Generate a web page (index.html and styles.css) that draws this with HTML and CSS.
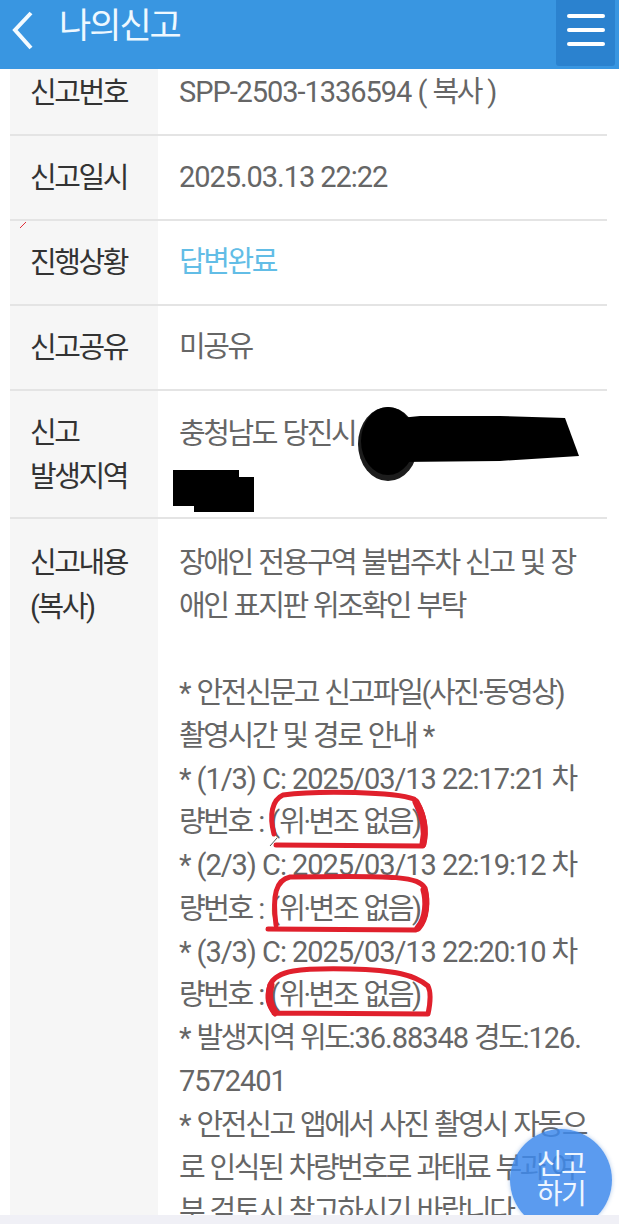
FILE: index.html
```html
<!DOCTYPE html>
<html lang="ko">
<head>
  <meta charset="UTF-8" />
  <meta name="viewport" content="width=device-width, initial-scale=1" />
  <title>나의신고</title>
  <link rel="stylesheet" href="styles.css">
</head>
<body>

  <div class="page">
    <!-- 상단 바 -->
    <header class="top">
      <svg class="back" width="22" height="40" viewBox="0 0 22 40"><path d="M20 2 L4 19 L20 37" fill="none" stroke="#f4fbff" stroke-width="4"/></svg>
      <h1>나의신고</h1>
      <button class="menu" aria-label="menu"><span></span><span></span><span></span></button>
    </header>

    <div class="list">
      <div class="row first">
        <div class="label">신고번호</div>
        <div class="value"><span><span class="n">SPP-2503-1336594 ( </span>복사<span class="n"> )</span></span></div>
      </div>
      <div class="row">
        <div class="label">신고일시</div>
        <div class="value"><span class="n">2025.03.13 22:22</span></div>
      </div>
      <div class="row">
        <div class="label">진행상황</div>
        <div class="value done">답변완료</div>
      </div>
      <div class="row">
        <div class="label">신고공유</div>
        <div class="value">미공유</div>
      </div>
      <div class="row two">
        <div class="label">신고<br>발생지역</div>
        <div class="value">충청남도 당진시</div>
      </div>
      <div class="row content">
        <div class="label">신고내용<br>(복사)</div>
        <div class="value">장애인 전용구역 불법주차 신고 및 장<br>애인 표지판 위조확인 부탁<br><br><span class="n">* </span>안전신문고 신고파일(사진·동영상)<br>촬영시간 및 경로 안내 <span class="n">*</span><br><span class="n">* (1/3) C: 2025/03/13 22:17:21 </span>차<br>량번호 <span class="n">: (</span>위·변조 없음<span class="n">)</span><br><span class="n">* (2/3) C: 2025/03/13 22:19:12 </span>차<br>량번호 <span class="n">: (</span>위·변조 없음<span class="n">)</span><br><span class="n">* (3/3) C: 2025/03/13 22:20:10 </span>차<br>량번호 <span class="n">: (</span>위·변조 없음<span class="n">)</span><br><span class="n">* </span>발생지역 위도<span class="n">:36.88348 </span>경도<span class="n">:126.<br>7572401<br>* </span>안전신고 앱에서 사진 촬영시 자동으<br>로 인식된 차량번호로 과태료 부과 여<br>부 검토시 참고하시기 바랍니다</div>
      </div>
    </div>

    <!-- 사진 위에 그린 표시 -->
    <svg class="marks" width="619" height="1224" viewBox="0 0 619 1224">
      <g fill="#000">
        <ellipse cx="388" cy="444" rx="30" ry="37" fill="#1c1c1c"/>
        <ellipse cx="388" cy="441" rx="27" ry="34"/>
        <path d="M380 420 L420 416 L500 416 L565 418 L579 456 L500 461 L400 462 Z"/>
        <rect x="173" y="470" width="66" height="36"/>
        <rect x="194" y="477" width="60" height="35"/>
      </g>
      <g fill="none" stroke="#e0202c" stroke-width="5" stroke-linecap="round" stroke-linejoin="round">
        <path d="M276 845 L423 846 C428 830 424 810 414 799 C395 792 320 790 283 795 C272 800 269 815 274 834"/>
        <path d="M268 929 L416 930 C428 922 428 898 425 888 C418 877 400 875 290 877 C276 880 272 895 276 925"/>
        <path d="M274 1013 L428 1014 C431 1000 431 992 428 986 C415 975 395 970 350 969 C300 968 276 970 270 985 C266 998 268 1005 275 1014"/>
      </g>
      <g fill="none" stroke="#e0202c" stroke-width="7" stroke-linecap="round">
        <path d="M416 802 C423 815 426 830 423 844"/>
        <path d="M424 890 C427 900 427 918 418 928"/>
        <path d="M271 985 C268 995 270 1005 275 1012"/>
      </g>
      <path d="M20 228 L26 222" stroke="#e0303a" stroke-width="1" fill="none"/>
      <path d="M270 846 L277 838" stroke="#555" stroke-width="1" fill="none"/>
    </svg>

    <div class="report-btn">신고<br>하기</div>
    <div class="bottom"></div>
  </div>

</body>
</html>
```

FILE: styles.css
```css
* { box-sizing: border-box; }
html, body { margin: 0; padding: 0; background: #fff; }
body { font-family: Roboto, "Noto Sans CJK KR", "Noto Sans", sans-serif; font-weight: 400; }

.page { position: relative; width: 619px; height: 1224px; overflow: hidden; }

.top {
  display: flex; align-items: center; height: 69px;
  background: #3996e1; color: #fff; padding: 0 4px 0 11px;
}
.top .back { flex: none; margin-bottom: 8px; }
.top h1 {
  flex: 1; margin: 0 0 24px 26px;
  font-size: 35px; font-weight: 400; letter-spacing: -2px; color: #eef8ff;
}
.menu {
  align-self: flex-start; width: 59px; height: 66px; padding: 14px 10px 0 11px;
  border: none; border-radius: 0 0 3px 3px; background: #2b82cf;
  display: flex; flex-direction: column; gap: 10px;
}
.menu span { display: block; height: 4px; background: #fff; border-radius: 2px; }

.list { margin: 0 12px 0 10px; }
.row {
  display: flex; border-bottom: 2px solid #e4e4e4; min-height: 85px;
  font-size: 29px; letter-spacing: -2.4px; word-spacing: 1.5px;
}
.row.first { min-height: 67px; }
.row.two { min-height: 128px; }
.row.content { border-bottom: none; }

.label {
  flex: none; width: 148px; padding-left: 20px; background: #f6f6f6;
  color: #333; display: flex; align-items: center; line-height: 44px;
}
.value { flex: 1; padding-left: 21px; color: #666; display: flex; align-items: center; line-height: 43.2px; white-space: nowrap; }
.value.done { color: #62bde6; }
.n { letter-spacing: -1.05px; word-spacing: 0; }

.row.first .label, .row.first .value { align-items: flex-start; padding-top: 2px; }
.row.two .label { display: block; padding-top: 20px; }
.row.two .value { align-items: flex-start; padding-top: 22px; }
.row.content .label { display: block; padding-top: 22px; height: 760px; }
.row.content .value { display: block; padding-top: 23px; }

.marks { position: absolute; left: 0; top: 0; pointer-events: none; }

.report-btn {
  position: absolute; left: 510px; top: 1129px; width: 102px; height: 102px;
  padding-top: 21px; border-radius: 50%; text-align: center;
  background: rgba(62, 138, 236, 0.85); box-shadow: 0 0 4px rgba(60, 120, 200, 0.4);
  color: #eef6ff; font-size: 28px; line-height: 30px; letter-spacing: -1.5px;
}
.bottom { position: absolute; left: 0; right: 0; bottom: 0; height: 9px; background: #f0f0f6; }
```
